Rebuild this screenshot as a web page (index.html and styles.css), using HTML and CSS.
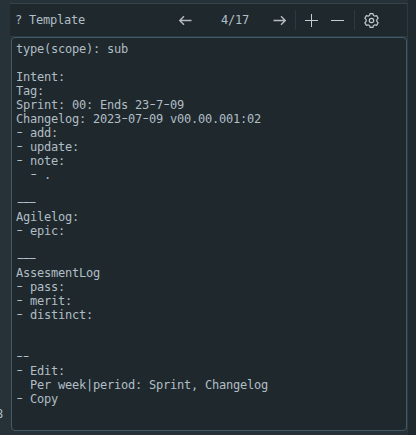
FILE: index.html
```html
<!DOCTYPE html>
<html lang="en">
<head>
<meta charset="utf-8">
<title>Template</title>
<link rel="stylesheet" href="styles.css">
</head>
<body>
<div class="gutter"><span>8</span></div>
<main class="panel">
  <header class="bar">
    <span class="title">? Template</span>
    <svg class="arrow" width="13" height="11" viewBox="0 0 13 11"><path d="M12.5 5.5H1M5 1.2L.8 5.5L5 9.8"/></svg>
    <span class="count">4/17</span>
    <svg class="arrow" width="13" height="11" viewBox="0 0 13 11"><path d="M.5 5.5H12M8 1.2L12.2 5.5L8 9.8"/></svg>
    <i class="sep"></i>
    <svg class="plus" width="13" height="13" viewBox="0 0 13 13"><path d="M0 6.5H13M6.5 0V13"/></svg>
    <svg class="minus" width="13" height="13" viewBox="0 0 13 13"><path d="M0 6.5H13"/></svg>
    <i class="sep"></i>
    <svg class="gear" width="15" height="15" viewBox="0 0 15 15"><path d="M6.1.7h2.8l.5 1.7 1.4.8 1.9-.5 1.4 2.4-1.3 1.5v1.8l1.3 1.5-1.4 2.4-1.9-.5-1.4.8-.5 1.7H6.1l-.5-1.7-1.4-.8-1.9.5L.9 9.9l1.3-1.5V6.6L.9 5.1l1.4-2.4 1.9.5 1.4-.8z"/><circle cx="7.5" cy="7.5" r="2.2"/></svg>
  </header>
  <pre class="note">type(scope): sub

Intent:
Tag:
Sprint: 00: Ends 23<b>-</b>7<b>-</b>09
Changelog: 2023<b>-</b>07<b>-</b>09 v00.00.001:02
<b>-</b> add:
<b>-</b> update:
<b>-</b> note:
  <b>-</b> .

<b class="rule">---</b>
Agilelog:
<b>-</b> epic:

<b class="rule">---</b>
AssesmentLog
<b>-</b> pass:
<b>-</b> merit:
<b>-</b> distinct:


<b class="rule short">--</b>
<b>-</b> Edit:
  Per week|period: Sprint, Changelog
<b>-</b> Copy</pre>
</main>
</body>
</html>
```
FILE: styles.css
```css
* { box-sizing: border-box; }
body {
  margin: 0;
  width: 416px;
  height: 435px;
  overflow: hidden;
  display: grid;
  grid-template-columns: 10px 398px 8px;
  background: linear-gradient(90deg, #263238 408px, #20292e 408px);
  font: 12px/14px "DejaVu Sans Mono", monospace;
  letter-spacing: -0.224px;
  color: #b0bec5;
}
.gutter { padding-top: 407px; overflow: hidden; }
.gutter span { display: block; margin-left: -4px; }
.panel {
  margin-top: 3px;
  height: 429px;
  border-top: 1px solid #35444c;
  border-right: 1px solid #2b3940;
}
.bar {
  height: 33px;
  display: flex;
  align-items: center;
  padding-left: 5px;
  background: #1f282d;
  border-bottom: 1px solid #2b3940;
}
.bar svg { fill: none; stroke: #c3cdd0; stroke-width: 1; flex: none; }
.title { width: 164px; }
.bar .arrow { stroke: #b4bcbf; stroke-width: 1.4; }
.bar .gear { stroke-width: 1.2; }
.count { width: 28px; margin: 0 24px 0 29px; }
.sep { width: 1px; height: 20px; background: #2b3940; flex: none; margin: 0 9px; }
.minus { margin-left: 13px; }
.minus + .sep { margin: 0 9px 0 10px; }
.note {
  height: 394px;
  margin: 0 0 0 1px;
  padding: 4px 4px;
  border: 1px solid #435b66;
  border-radius: 4px;
  background: #1f282d;
  font: inherit;
}
.note b {
  display: inline-block;
  width: 7px;
  height: 14px;
  vertical-align: top;
  font-weight: 400;
  transform: translateY(-1px) scaleX(1.5);
}
.note b.rule {
  width: 21px;
  letter-spacing: -4.1px;
  transform-origin: 0 50%;
  transform: translate(-2.6px, -1px) scaleX(1.95);
}
.note b.short {
  width: 14px;
  letter-spacing: -3px;
  transform: translate(-2px, -1px) scaleX(1.55);
}
```
